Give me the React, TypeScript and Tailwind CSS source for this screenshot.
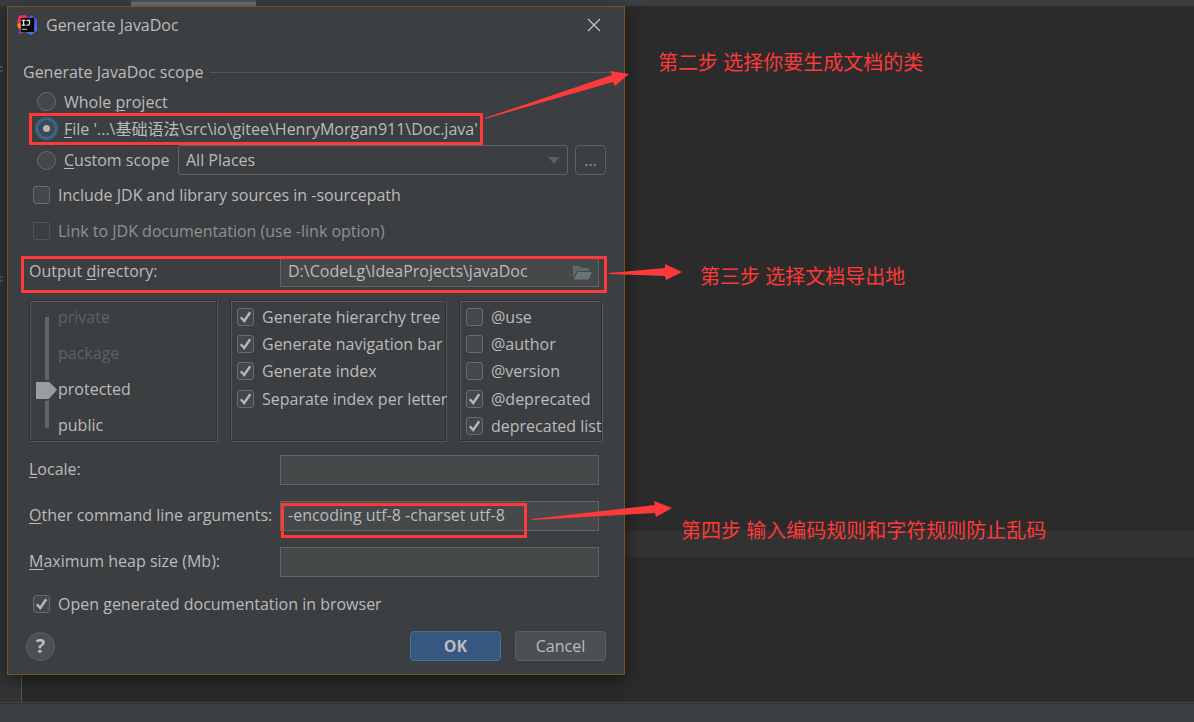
import type { ReactNode } from "react";
import { useState } from "react";

const RED = "#fd3939";

function IdeaLogo() {
  return (
    <svg viewBox="0 0 20 20" className="size-5 shrink-0" aria-hidden="true">
      <defs>
        <linearGradient id="warm" x1="0" y1="0" x2="0.3" y2="1">
          <stop offset="0" stopColor="#f83256" />
          <stop offset="0.5" stopColor="#f52b63" />
          <stop offset="1" stopColor="#8f45c4" />
        </linearGradient>
        <linearGradient id="cool" x1="0" y1="0" x2="0.4" y2="1">
          <stop offset="0" stopColor="#2f7df0" />
          <stop offset="0.5" stopColor="#5a55dc" />
          <stop offset="1" stopColor="#2f7cf3" />
        </linearGradient>
      </defs>
      <path d="M0.8 4.5 L2.2 0.5 L9 0.3 L12 4 L12 16 L6 17.6 L2 19 L2.4 15 L0.2 9 Z" fill="url(#warm)" />
      <path d="M0 9.5 L4 8 L4 14.5 L1 12.6 Z" fill="#f98a1e" />
      <path d="M11.5 3 L14 0.3 L20 4.5 L20 15.5 L14 20 L8.5 17.2 L12 14 Z" fill="url(#cool)" />
      <rect x="3.8" y="2.9" width="13.4" height="14.1" fill="#0b0708" />
      <path d="M4.8 5.3h3.6M6.6 5.3v4.6M4.8 10.2h3.6M9.6 5.3h2.9v3.4q0 1.5-1.4 1.5h-1.6" fill="none" stroke="#e8e8e8" strokeWidth="1.2" />
      <path d="M4.8 14.3h5.2" stroke="#a8a8a8" strokeWidth="1.2" />
    </svg>
  );
}

function Key({ children }: { children: ReactNode }) {
  return <span className="underline decoration-1 underline-offset-2">{children}</span>;
}

function Check({ label, on = false, disabled = false }: { label: ReactNode; on?: boolean; disabled?: boolean }) {
  return (
    <label className={disabled ? "flex items-center gap-2 text-[#8f9192]" : "flex items-center gap-2"}>
      <span className="grid h-[18px] w-[17px] shrink-0 place-items-center">
        <input
          type="checkbox"
          defaultChecked={on}
          disabled={disabled}
          className="peer col-start-1 row-start-1 h-[18px] w-[17px] appearance-none rounded-[3px] border border-[#6b6b6b] bg-[#43494a] disabled:border-[#545556] disabled:bg-[#3c3f41]"
        />
        <svg viewBox="0 0 17 18" className="pointer-events-none invisible col-start-1 row-start-1 h-[18px] w-[17px] peer-checked:visible" aria-hidden="true">
          <path d="M3.8 9.2 L7.2 13 L13.2 4.2" fill="none" stroke="#b4b6b7" strokeWidth="2.4" />
        </svg>
      </span>
      <span className="whitespace-nowrap">{label}</span>
    </label>
  );
}

function Radio({ label, on = false }: { label: ReactNode; on?: boolean }) {
  return (
    <label className="flex items-center gap-2">
      <span className="grid size-[19px] shrink-0 place-items-center">
        <input
          type="radio"
          name="scope"
          defaultChecked={on}
          className="peer col-start-1 row-start-1 size-[19px] appearance-none rounded-full border border-[#6b6b6b] bg-[#43494a] checked:border-[#466d94] checked:bg-[#3c4a55] checked:ring-2 checked:ring-[#3d6185]"
        />
        <span className="pointer-events-none invisible col-start-1 row-start-1 size-[7px] rounded-full bg-[#b4b6b7] peer-checked:visible" />
      </span>
      <span className="whitespace-nowrap">{label}</span>
    </label>
  );
}

function Field({ id, label, value = "", children }: { id: string; label: ReactNode; value?: string; children?: ReactNode }) {
  return (
    <div className="flex h-[30px] items-center">
      <label htmlFor={id} className="w-[251px] shrink-0 pb-[2px]">
        {label}
      </label>
      <div className="grid grow items-center">
        <input
          id={id}
          type="text"
          defaultValue={value}
          className="col-start-1 row-start-1 h-[30px] w-full border border-[#646464] bg-[#45494a] px-[7px] pb-[2px] outline-none"
        />
        {children}
      </div>
    </div>
  );
}

function Panel({ children, className = "" }: { children: ReactNode; className?: string }) {
  return (
    <div className={"border border-[#2f3133] shadow-[1px_1px_0_#555758,inset_1px_1px_0_#555758] " + className}>{children}</div>
  );
}

const LEVELS = ["private", "package", "protected", "public"];

function Visibility() {
  const [level, setLevel] = useState(2);
  return (
    <Panel className="flex items-start pt-[6px] pl-[6px]">
      <input
        type="range"
        aria-label="Visibility"
        min={0}
        max={3}
        value={level}
        onChange={(e) => setLevel(Number(e.target.value))}
        className="h-[130px] w-[21px] appearance-none bg-[linear-gradient(#646464,#646464)] bg-[length:4px_111px] bg-center bg-no-repeat [writing-mode:vertical-lr] [&::-webkit-slider-thumb]:h-[21px] [&::-webkit-slider-thumb]:w-[21px] [&::-webkit-slider-thumb]:appearance-none [&::-webkit-slider-thumb]:bg-[linear-gradient(#3c3f41_2px,#9a9da0_2px,#9a9da0_19px,#3c3f41_19px)] [&::-webkit-slider-thumb]:[clip-path:polygon(0_0,13px_0,13px_2px,21px_10px,13px_19px,13px_21px,0_21px)]"
      />
      <div className="flex h-32 flex-col justify-between pl-px leading-5">
        {LEVELS.map((name, i) => (
          <span key={name} className={i < level ? "text-[#5f6162]" : ""}>
            {name}
          </span>
        ))}
      </div>
    </Panel>
  );
}

function Dialog() {
  return (
    <form
      aria-label="Generate JavaDoc"
      onSubmit={(e) => e.preventDefault()}
      className="absolute top-[6px] left-[7px] w-[618px] border border-[#76531f] bg-[#3c3f41] pb-[13px] shadow-[0_4px_16px_rgba(0,0,0,0.5)]"
    >
      <header className="flex h-9 items-center gap-[9px] pr-[22px] pl-[9px]">
        <IdeaLogo />
        <h1 className="grow">Generate JavaDoc</h1>
        <button type="button" aria-label="Close" className="grid size-4 place-items-center">
          <svg viewBox="0 0 14 14" className="size-[14px]" aria-hidden="true">
            <path d="M1 1 L13 13 M13 1 L1 13" stroke="#c3c5c6" strokeWidth="1.2" />
          </svg>
        </button>
      </header>

      <fieldset className="pt-[19px]">
        <div className="flex h-5 items-center gap-[6px] pr-[14px] pl-[15px]">
          <span>Generate JavaDoc scope</span>
          <span className="h-px grow bg-[#555758]" />
        </div>
        <div className="pt-[6px] pr-[18px] pl-[29px]">
          <div className="flex h-[27px] items-center">
            <Radio label={<>Whole <Key>p</Key>roject</>} />
          </div>
          <div className="flex h-[27px] items-center">
            <Radio on label={<><Key>F</Key>ile '...\基础语法\src\io\gitee\HenryMorgan911\Doc.java'</>} />
          </div>
          <div className="mt-[3px] flex h-[30px] items-center">
            <div className="w-[141px] shrink-0">
              <Radio label={<><Key>C</Key>ustom scope</>} />
            </div>
            <div className="grid grow items-center">
              <select
                aria-label="Custom scope"
                className="col-start-1 row-start-1 h-[30px] w-full appearance-none rounded-[3px] border border-[#646464] bg-[#3c3f41] px-[7px] outline-none"
              >
                <option>All Places</option>
              </select>
              <svg viewBox="0 0 12 7" className="pointer-events-none col-start-1 row-start-1 mr-2 h-[7px] w-3 justify-self-end" aria-hidden="true">
                <path d="M0 0h12L6 7z" fill="#5b5d5f" />
              </svg>
            </div>
            <button type="button" aria-label="Choose scope" className="ml-[7px] h-[30px] w-[31px] rounded-[4px] border border-[#5e6060] text-[#8f9192]">
              ...
            </button>
          </div>
        </div>
      </fieldset>

      <div className="mt-[2px] pl-[25px]">
        <div className="flex h-9 items-center">
          <Check label="Include JDK and library sources in -sourcepath" />
        </div>
        <div className="flex h-9 items-center">
          <Check disabled label="Link to JDK documentation (use -link option)" />
        </div>
      </div>

      <div className="mt-2 pr-[25px] pl-[21px]">
        <Field id="output" label={<>Output <Key>d</Key>irectory:</>} value="D:\CodeLg\IdeaProjects\javaDoc">
          <button type="button" aria-label="Browse" className="col-start-1 row-start-1 mr-[7px] justify-self-end">
            <svg viewBox="0 0 19 15" className="h-[15px] w-[19px]" aria-hidden="true">
              <path d="M0 1h6l2 2h8v3H4L0 13z" fill="#5f686c" />
              <path d="M4.6 7H19l-3.4 7.5H0.8z" fill="#6a7479" />
            </svg>
          </button>
        </Field>
      </div>

      <div className="mt-[13px] grid h-[141px] grid-cols-[188fr_216fr_143fr] gap-[13px] pr-[22px] pl-[21px]">
        <Visibility />
        <Panel className="grid min-w-0 grid-rows-5 pt-[2px] pl-[6px]">
          <Check on label="Generate hierarchy tree" />
          <Check on label="Generate navigation bar" />
          <Check on label="Generate index" />
          <Check on label="Separate index per letter" />
        </Panel>
        <Panel className="grid min-w-0 grid-rows-5 pt-[2px] pl-[6px]">
          <Check label="@use" />
          <Check label="@author" />
          <Check label="@version" />
          <Check on label="@deprecated" />
          <Check on label="deprecated list" />
        </Panel>
      </div>

      <div className="mt-[14px] flex flex-col gap-4 pr-[25px] pl-[21px]">
        <Field id="locale" label={<><Key>L</Key>ocale:</>} />
        <Field id="args" label={<><Key>O</Key>ther command line arguments:</>} value="-encoding utf-8 -charset utf-8" />
        <Field id="heap" label={<><Key>M</Key>aximum heap size (Mb):</>} />
      </div>

      <div className="mt-[9px] flex h-9 items-center pl-[25px]">
        <Check on label={<>Open <Key>g</Key>enerated documentation in browser</>} />
      </div>

      <footer className="mt-[9px] flex items-center pr-[18px] pl-[18px]">
        <button type="button" aria-label="Help" className="grid size-[29px] place-items-center rounded-full border border-[#5e6060] bg-[#4c5052] text-xl leading-none font-bold">
          ?
        </button>
        <div className="ml-auto flex gap-[14px]">
          <button type="submit" className="h-[30px] w-[91px] rounded-[4px] border border-[#4c708c] bg-[#365880] font-bold">
            OK
          </button>
          <button type="button" className="h-[30px] w-[91px] rounded-[4px] border border-[#5e6060] bg-[#4c5052]">
            Cancel
          </button>
        </div>
      </footer>
    </form>
  );
}

function Annotations() {
  return (
    <div className="pointer-events-none absolute inset-0 text-xl leading-6 whitespace-nowrap text-[#fd3939]">
      <div className="absolute top-[113px] left-[29px] h-8 w-[454px] border-3 border-current" />
      <div className="absolute top-[256px] left-[21px] h-[37px] w-[586px] border-3 border-current" />
      <div className="absolute top-[503px] left-[281px] h-[35px] w-[246px] border-3 border-current" />
      <svg width="700" height="540" className="absolute top-0 left-0" fill={RED} aria-hidden="true">
        <path d="M485 118 L612 75 L610 71 L629 74 L615 86 L613 82 L485 119 Z" />
        <path d="M609 273 L665 268 L665 264 L682 272 L666 280 L665 276 L609 274 Z" />
        <path d="M532 519 L655 505 L654 501 L672 508 L656 517 L655 513 L532 520 Z" />
      </svg>
      <p className="absolute top-[51px] left-[658px]">第二步 选择你要生成文档的类</p>
      <p className="absolute top-[265px] left-[700px]">第三步 选择文档导出地</p>
      <p className="absolute top-[519px] left-[681px]">第四步 输入编码规则和字符规则防止乱码</p>
    </div>
  );
}

function Editor() {
  return (
    <>
      <div className="h-[6px] bg-[#3c3f41] pl-[131px]">
        <div className="h-[6px] w-[125px] border-t-2 border-[#4e5254] bg-[#6e7377]" />
      </div>
      <div className="flex grow">
        <div className="w-[22px] border-r border-[#555555] bg-[#313335] pt-[60px]">
          <div className="h-[6px] w-[3px] border-y-2 border-[#4d5658]" />
          <div className="mt-[204px] h-[6px] w-[3px] border-y-2 border-[#4d5658]" />
        </div>
        <div className="grow pt-[525px]">
          <div className="h-[26px] bg-[#323232]" />
        </div>
      </div>
      <div className="h-5 border-t border-[#414141] bg-[#3c3f41]">
        <div className="h-px bg-[#323232]" />
      </div>
    </>
  );
}

export default function App() {
  return (
    <main className="relative flex min-h-screen flex-col overflow-hidden bg-[#2b2b2b] font-['Open_Sans','Noto_Sans_CJK_SC',sans-serif] text-base leading-5 text-[#bbbbbb]">
      <Editor />
      <Dialog />
      <Annotations />
    </main>
  );
}
